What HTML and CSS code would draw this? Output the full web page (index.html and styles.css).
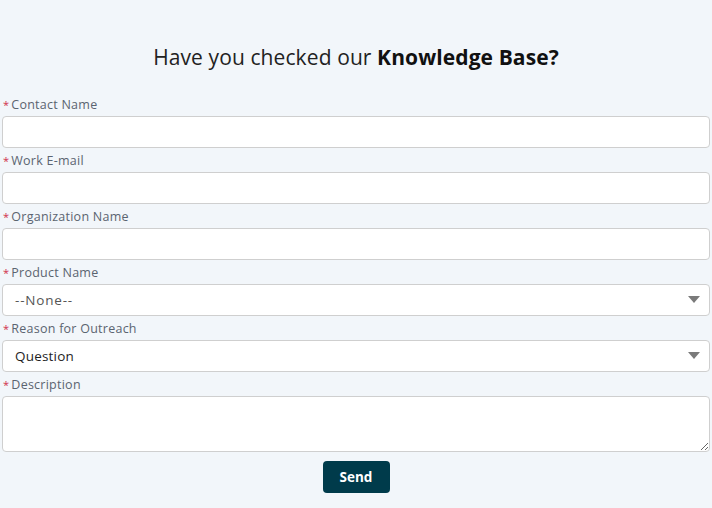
FILE: index.html
```html
<!DOCTYPE html>
<html lang="en">
<head>
<meta charset="utf-8">
<title>Contact</title>
<link rel="stylesheet" href="styles.css">
</head>
<body>
<div class="page">
  <h1 class="title">Have you checked our <b>Knowledge Base?</b></h1>
  <form class="form">
    <div class="field">
      <label class="label"><span class="req">*</span>Contact Name</label>
      <input class="input" type="text">
    </div>
    <div class="field">
      <label class="label"><span class="req">*</span>Work E-mail</label>
      <input class="input" type="text">
    </div>
    <div class="field">
      <label class="label"><span class="req">*</span>Organization Name</label>
      <input class="input" type="text">
    </div>
    <div class="field">
      <label class="label"><span class="req">*</span>Product Name</label>
      <div class="select muted"><span>--None--</span><svg class="caret" width="12" height="8" viewBox="0 0 12 8"><path d="M0 0h12L6 7z" fill="#7a7a7a"/></svg></div>
    </div>
    <div class="field">
      <label class="label"><span class="req">*</span>Reason for Outreach</label>
      <div class="select"><span>Question</span><svg class="caret" width="12" height="8" viewBox="0 0 12 8"><path d="M0 0h12L6 7z" fill="#7a7a7a"/></svg></div>
    </div>
    <div class="field">
      <label class="label"><span class="req">*</span>Description</label>
      <textarea class="textarea"></textarea>
    </div>
    <div class="actions">
      <button class="send" type="button">Send</button>
    </div>
  </form>
</div>
</body>
</html>
```
FILE: styles.css
```css
html, body {
  margin: 0;
  padding: 0;
  background: #f2f6fa;
}
.page {
  padding: 45px 2px 0;
  font-family: "Open Sans", "Liberation Sans", sans-serif;
}
.title {
  margin: 0 0 29px;
  text-align: center;
  font-size: 21px;
  line-height: 24px;
  font-weight: 400;
  letter-spacing: 0.1px;
  color: #222;
}
.title b {
  font-weight: 700;
  color: #111;
}
.form {
  display: flex;
  flex-direction: column;
}
.field {
  display: flex;
  flex-direction: column;
  margin-bottom: 6px;
}
.label {
  font-size: 12.5px;
  line-height: 14px;
  letter-spacing: 0.25px;
  color: #5b6470;
  margin-bottom: 4px;
  padding-left: 1px;
}
.req {
  color: #d0304a;
  font-size: 11px;
  margin-right: 2px;
}
.input, .select, .textarea {
  box-sizing: border-box;
  width: 100%;
  height: 32px;
  border: 1px solid #cfcfcf;
  border-radius: 4px;
  background: #fff;
  margin: 0;
}
.select {
  display: flex;
  align-items: center;
  justify-content: space-between;
  padding: 0 9px 0 12px;
  font-size: 13.5px;
  letter-spacing: 0.2px;
  color: #1e1e1e;
}
.select.muted {
  color: #555;
  letter-spacing: 0.8px;
}
.caret {
  display: block;
}
.textarea {
  height: 56px;
  resize: vertical;
  font-family: inherit;
}
.actions {
  display: flex;
  justify-content: center;
  padding-top: 3px;
}
.send {
  width: 67px;
  height: 32px;
  border: 0;
  border-radius: 4px;
  background: #003b4b;
  color: #fff;
  font-family: inherit;
  font-weight: 700;
  font-size: 13.5px;
}
```
